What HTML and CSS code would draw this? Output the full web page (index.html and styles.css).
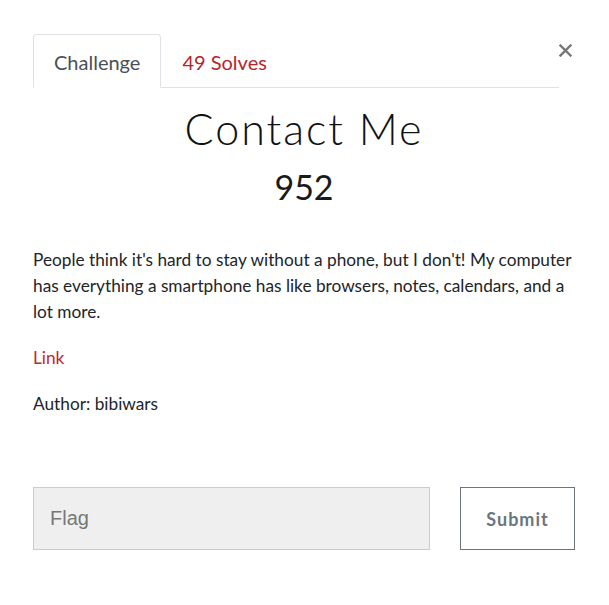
FILE: index.html
```html
<!DOCTYPE html>
<html lang="en">
<head>
  <meta charset="UTF-8">
  <meta name="viewport" content="width=device-width, initial-scale=1.0">
  <title>Contact Me</title>
  <link rel="stylesheet" href="styles.css">
</head>
<body>
<div class="modal">
  <div class="modal-head">
    <ul class="tabs">
      <li class="tab active">Challenge</li>
      <li class="tab solves">49 Solves</li>
    </ul>
    <button class="close" type="button" aria-label="Close">
      <svg width="13" height="13" viewBox="0 0 13 13">
        <path d="M1.5 1.5 L11.5 11.5 M11.5 1.5 L1.5 11.5" stroke="#777" stroke-width="2.4" stroke-linecap="square"/>
      </svg>
    </button>
  </div>
  <div class="challenge">
    <h2 class="name">Contact Me</h2>
    <h3 class="value">952</h3>
    <div class="description">
      <p>People think it's hard to stay without a phone, but I don't! My computer has everything a smartphone has like browsers, notes, calendars, and a lot more.</p>
      <p><a href="#">Link</a></p>
      <p>Author: bibiwars</p>
    </div>
    <form class="submit-row" onsubmit="return false;">
      <input class="flag" type="text" placeholder="Flag">
      <button class="submit" type="submit">Submit</button>
    </form>
  </div>
</div>
</body>
</html>
```

FILE: styles.css
```css
* {
  box-sizing: border-box;
}
body {
  margin: 0;
  background-color: #fff;
  font-family: Lato, "Noto Sans", sans-serif;
  color: #212529;
}
.modal {
  padding: 34px 34px 0 33px;
}
.modal-head {
  display: flex;
  align-items: flex-start;
}
.tabs {
  flex: 1;
  display: flex;
  list-style: none;
  margin: 0;
  padding: 0;
  border-bottom: 1px solid #dee2e6;
}
.tab {
  padding: 14px 20px 12px;
  font-size: 20px;
  line-height: 26px;
  border: 1px solid transparent;
  border-top-left-radius: 4px;
  border-top-right-radius: 4px;
  margin-bottom: -1px;
}
.tab.active {
  color: #495057;
  border-color: #dee2e6 #dee2e6 #fff;
  background-color: #fff;
}
.tab.solves {
  color: #b5262b;
}
.close {
  background: none;
  border: none;
  padding: 0;
  margin: 10px 3px 0 0;
  line-height: 0;
  cursor: pointer;
}
.name {
  margin: 16px 0 0;
  text-align: center;
  font-family: Lato, sans-serif;
  font-weight: 300;
  font-size: 43px;
  letter-spacing: 2px;
  line-height: 50px;
  color: #111;
}
.value {
  margin: 12px 0 0;
  text-align: center;
  font-weight: 400;
  font-size: 34px;
  line-height: 42px;
  color: #1a1a1a;
}
.description {
  margin-top: 39px;
  font-size: 17.25px;
  line-height: 26px;
}
.description p {
  margin: 0 0 20px;
}
.description a {
  color: #c0282d;
  text-decoration: none;
}
.submit-row {
  display: flex;
  gap: 30px;
  margin-top: 70px;
}
.flag {
  width: 397px;
  height: 63px;
  padding: 0 16px;
  background-color: #efefef;
  border: 1px solid #ccc;
  font-family: "Liberation Sans", sans-serif;
  font-size: 20px;
  color: #495057;
}
.flag::placeholder {
  color: #777;
}
.submit {
  width: 115px;
  height: 63px;
  background-color: #fff;
  border: 1px solid #6c757d;
  font-family: Lato, sans-serif;
  font-weight: bold;
  font-size: 18px;
  letter-spacing: 1px;
  color: #6c757d;
}
```
